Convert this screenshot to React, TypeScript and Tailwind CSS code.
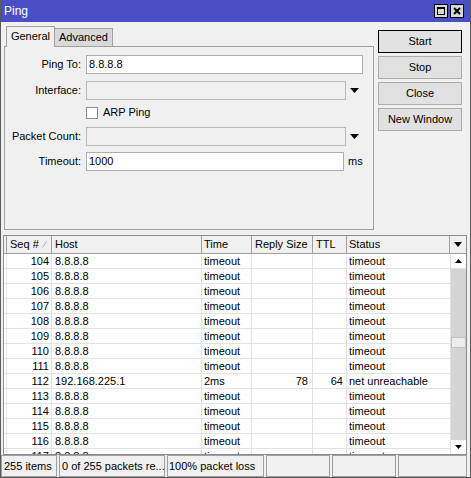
import React from "react";

type Row = {
  seq: number;
  host: string;
  time: string;
  size: string;
  ttl: string;
  status: string;
};

const timeoutRow = (seq: number): Row => ({
  seq,
  host: "8.8.8.8",
  time: "timeout",
  size: "",
  ttl: "",
  status: "timeout",
});

const rows: Row[] = [
  ...[104, 105, 106, 107, 108, 109, 110, 111].map(timeoutRow),
  {
    seq: 112,
    host: "192.168.225.1",
    time: "2ms",
    size: "78",
    ttl: "64",
    status: "net unreachable",
  },
  ...[113, 114, 115, 116, 117].map(timeoutRow),
];

function ArrowDown({ w = 9, h = 5 }: { w?: number; h?: number }) {
  return (
    <svg width={w} height={h} viewBox={`0 0 ${w} ${h}`}>
      <polygon points={`0,0 ${w},0 ${w / 2},${h}`} fill="#000" />
    </svg>
  );
}

function ArrowUp({ w = 7, h = 4 }: { w?: number; h?: number }) {
  return (
    <svg width={w} height={h} viewBox={`0 0 ${w} ${h}`}>
      <polygon points={`0,${h} ${w},${h} ${w / 2},0`} fill="#000" />
    </svg>
  );
}

function FormRow({
  label,
  className,
  children,
}: {
  label: string;
  className?: string;
  children: React.ReactNode;
}) {
  return (
    <div className={"flex items-center h-[19px] " + (className ?? "")}>
      <div className="w-[76px] text-right whitespace-nowrap">{label}</div>
      <div className="ml-[5px] flex items-center">{children}</div>
    </div>
  );
}

function WinButton({ label, active }: { label: string; active?: boolean }) {
  return (
    <div
      className={
        "w-[84px] h-[23px] flex items-center justify-center bg-[#e1e1e1] border " +
        (active ? "border-[#000]" : "border-[#adadad]")
      }
    >
      {label}
    </div>
  );
}

export default function App() {
  return (
    <div className="w-[471px] h-[478px] bg-[#f0f0f0] border-x border-b border-[#5a5a5a] flex flex-col text-[11px] leading-none text-black font-['Liberation_Sans',Arial,sans-serif] overflow-hidden">
      {/* title bar */}
      <div className="h-[22px] shrink-0 bg-[#4a4fc5] flex items-center justify-between pl-[3px] pr-[6px]">
        <span className="text-white text-[12px]">Ping</span>
        <div className="flex gap-[2px]">
          <div className="w-[14px] h-[14px] bg-[#d8d8d8] border border-black flex items-center justify-center">
            <div className="w-[8px] h-[8px] border border-black border-t-2" />
          </div>
          <div className="w-[14px] h-[14px] bg-[#d8d8d8] border border-black flex items-center justify-center">
            <svg width="8" height="8" viewBox="0 0 8 8">
              <path d="M1 1 L7 7 M7 1 L1 7" stroke="#000" strokeWidth="2" />
            </svg>
          </div>
        </div>
      </div>

      {/* top area */}
      <div className="flex pt-[4px] shrink-0">
        <div className="ml-[3px] w-[370px]">
          <div className="flex items-end h-[20px] pl-[2px]">
            <div className="relative z-10 h-[21px] -mb-px w-[49px] bg-[#f0f0f0] border-t border-x border-[#a0a0a0] flex items-center justify-center pb-[2px]">
              General
            </div>
            <div className="h-[18px] w-[58px] bg-[#d9d9d9] border-t border-r border-[#a0a0a0] flex items-center justify-center">
              Advanced
            </div>
          </div>
          <div className="h-[184px] border border-[#a0a0a0] pt-[8px] flex flex-col">
            <FormRow label="Ping To:">
              <div className="w-[277px] h-[19px] bg-white border border-[#abadb3] flex items-center pl-[2px]">
                8.8.8.8
              </div>
            </FormRow>
            <FormRow label="Interface:" className="mt-[7px]">
              <div className="w-[260px] h-[19px] border border-[#b9b9b9]" />
              <div className="ml-[4px]">
                <ArrowDown />
              </div>
            </FormRow>
            <FormRow label="" className="mt-[3px]">
              <div className="w-[12px] h-[12px] bg-white border border-[#8f8f8f]" />
              <span className="ml-[5px]">ARP Ping</span>
            </FormRow>
            <FormRow label="Packet Count:" className="mt-[5px]">
              <div className="w-[260px] h-[19px] border border-[#b9b9b9]" />
              <div className="ml-[4px]">
                <ArrowDown />
              </div>
            </FormRow>
            <FormRow label="Timeout:" className="mt-[6px]">
              <div className="w-[258px] h-[19px] bg-white border border-[#abadb3] flex items-center pl-[2px]">
                1000
              </div>
              <span className="ml-[4px]">ms</span>
            </FormRow>
          </div>
        </div>
        <div className="ml-[4px] pt-[4px] flex flex-col gap-[3px]">
          <WinButton label="Start" active />
          <WinButton label="Stop" />
          <WinButton label="Close" />
          <WinButton label="New Window" />
        </div>
      </div>

      {/* table */}
      <div className="mt-[5px] ml-[2px] w-[464px] h-[220px] shrink-0 border border-[#8c8c8c] flex flex-col">
        <div className="h-[18px] shrink-0 grid grid-cols-[3px_45px_150px_50px_61px_34px_103px_16px] border-b border-[#a0a0a0] bg-[#f0f0f0]">
          <div className="border-r border-[#a0a0a0]" />
          <div className="border-r border-[#a0a0a0] flex items-center pl-[3px]">
            Seq #
            <svg width="5" height="7" viewBox="0 0 5 7" className="ml-[3px]">
              <path d="M0.5 6.5 L4.5 0.5" stroke="#b4b4b4" strokeWidth="1" />
            </svg>
          </div>
          <div className="border-r border-[#a0a0a0] flex items-center pl-[3px]">Host</div>
          <div className="border-r border-[#a0a0a0] flex items-center pl-[2px]">Time</div>
          <div className="border-r border-[#a0a0a0] flex items-center pl-[3px]">Reply Size</div>
          <div className="border-r border-[#a0a0a0] flex items-center pl-[3px]">TTL</div>
          <div className="border-r border-[#a0a0a0] flex items-center pl-[2px]">Status</div>
          <div className="flex items-center justify-center">
            <ArrowDown w={8} h={5} />
          </div>
        </div>
        <div className="flex flex-1 min-h-0">
          <div className="w-[446px] overflow-hidden bg-white">
            {rows.map((r) => (
              <div
                key={r.seq}
                className="h-[15px] grid grid-cols-[3px_45px_150px_50px_61px_34px_103px] border-b border-[#e2e2e2]"
              >
                <div className="border-r border-[#e2e2e2]" />
                <div className="border-r border-[#e2e2e2] flex items-center justify-end pr-[2px]">
                  {r.seq}
                </div>
                <div className="border-r border-[#e2e2e2] flex items-center pl-[3px]">
                  {r.host}
                </div>
                <div className="border-r border-[#e2e2e2] flex items-center pl-[2px]">
                  {r.time}
                </div>
                <div className="border-r border-[#e2e2e2] flex items-center justify-end pr-[4px]">
                  {r.size}
                </div>
                <div className="border-r border-[#e2e2e2] flex items-center justify-end pr-[3px]">
                  {r.ttl}
                </div>
                <div className="flex items-center pl-[2px] whitespace-nowrap">
                  {r.status}
                </div>
              </div>
            ))}
          </div>
          <div className="w-[16px] flex flex-col border-l border-[#e2e2e2] bg-[#d4d4d4]">
            <div className="h-[15px] bg-white border-b border-[#e2e2e2] flex items-center justify-center">
              <ArrowUp />
            </div>
            <div className="h-[68px]" />
            <div className="h-[11px] bg-[#ececec] border border-[#c2c2c2]" />
            <div className="flex-1" />
            <div className="h-[14px] bg-white flex items-center justify-center">
              <ArrowDown w={7} h={4} />
            </div>
          </div>
        </div>
      </div>

      {/* status bar */}
      <div className="h-[22px] shrink-0 flex gap-[2px] pr-[3px]">
        <div className="w-[56px] border border-[#a0a0a0] flex items-center pl-[2px] whitespace-nowrap">
          255 items
        </div>
        <div className="w-[106px] border border-[#a0a0a0] flex items-center pl-[2px] whitespace-nowrap">
          0 of 255 packets re...
        </div>
        <div className="w-[97px] border border-[#a0a0a0] flex items-center pl-[1px] whitespace-nowrap">
          100% packet loss
        </div>
        <div className="w-[64px] border border-[#a0a0a0]" />
        <div className="w-[64px] border border-[#a0a0a0]" />
        <div className="flex-1 border border-[#a0a0a0]" />
      </div>
    </div>
  );
}
